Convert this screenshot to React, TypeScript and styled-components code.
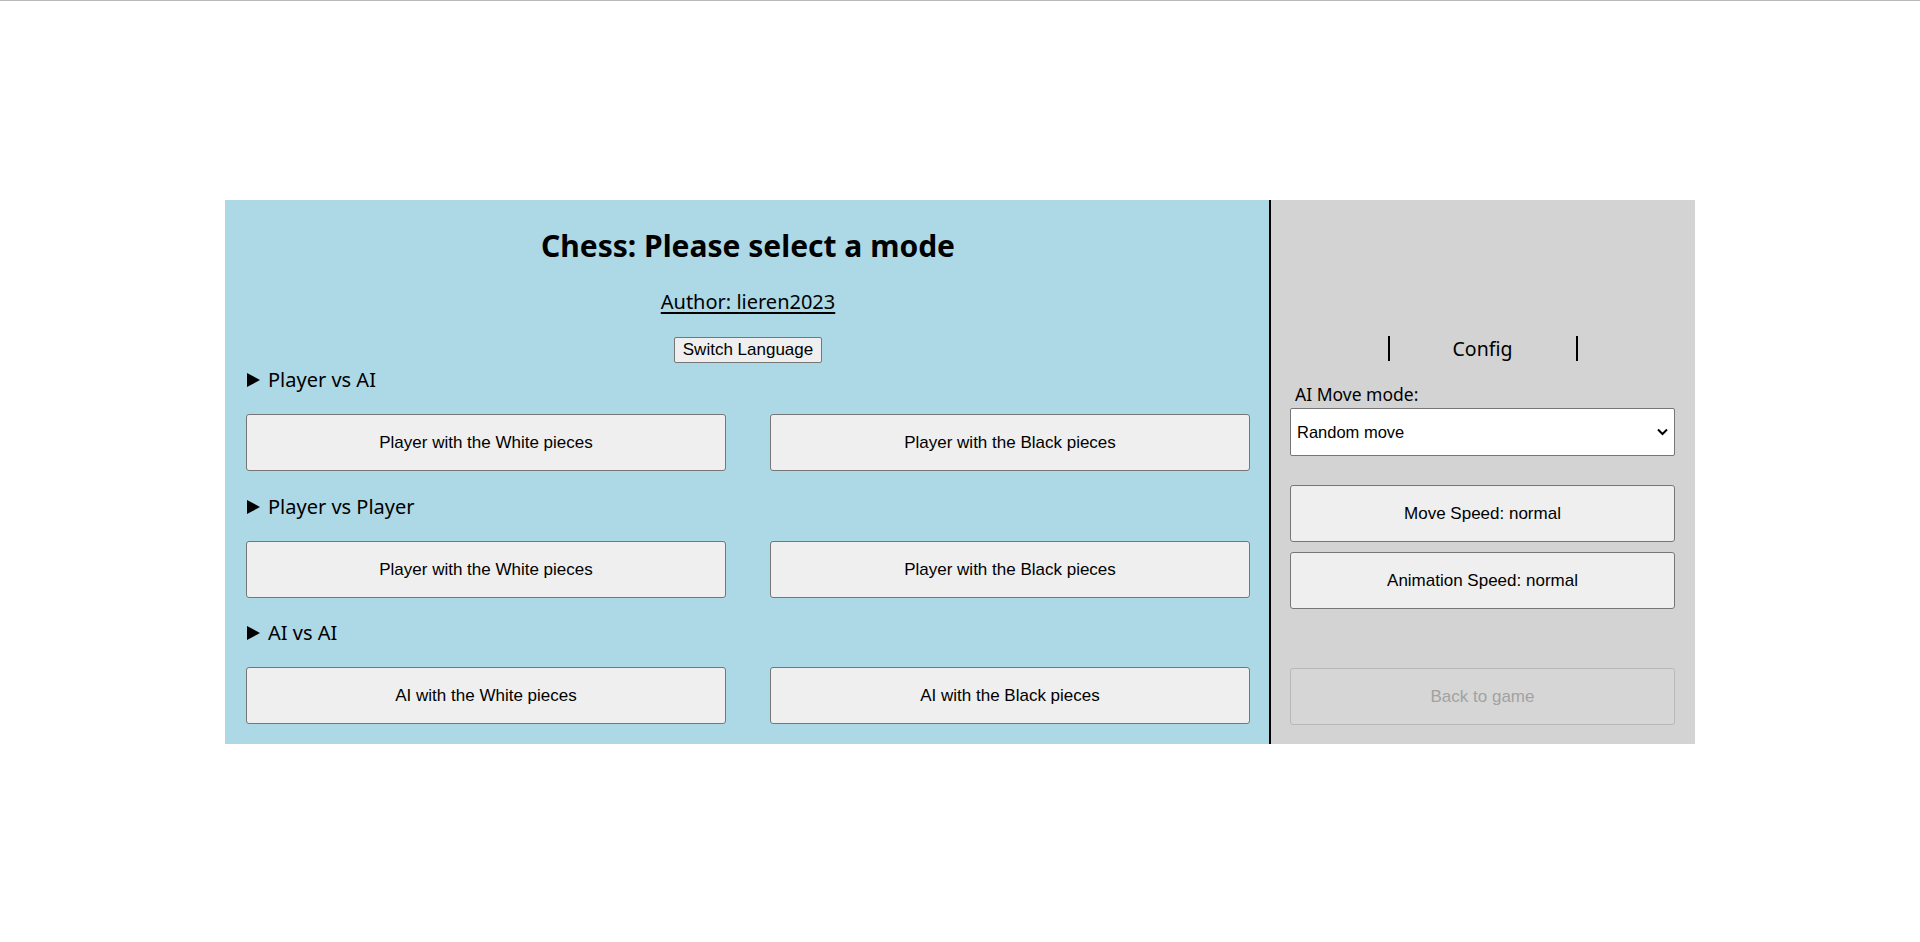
import React from "react";
import styled, { createGlobalStyle } from "styled-components";

const GlobalStyle = createGlobalStyle`
  html, body {
    margin: 0;
    padding: 0;
    background: #ffffff;
  }
  body {
    font-family: "Noto Sans", "Open Sans", sans-serif;
    color: #000;
  }
`;

const Page = styled.div`
  border-top: 1px solid #b9b9b9;
  height: 941px;
  box-sizing: border-box;
  padding-top: 199px;
  display: flex;
  justify-content: center;
  align-items: flex-start;
`;

const Layout = styled.div`
  display: flex;
  height: 544px;
`;

const ModePanel = styled.div`
  width: 1044px;
  box-sizing: border-box;
  background: #add8e6;
  padding: 0 19px 20px 21px;
  display: flex;
  flex-direction: column;
`;

const Title = styled.h1`
  margin: 27px 0 0;
  font-size: 30px;
  line-height: 38px;
  font-weight: 700;
  text-align: center;
`;

const Author = styled.a`
  margin: 25px auto 0;
  font-size: 20px;
  line-height: 24px;
  color: #000;
  text-decoration: underline;
  text-underline-offset: 3px;
`;

const SwitchButton = styled.button`
  margin: 23px auto 0;
  height: 26px;
  padding: 0 8px;
  font-family: "Liberation Sans", Arial, sans-serif;
  font-size: 17px;
  color: #000;
  background: #efefef;
  border: 1px solid #767676;
  border-radius: 2px;
`;

const Summary = styled.div<{ $top: number }>`
  margin-top: ${(p) => p.$top}px;
  display: flex;
  align-items: center;
  gap: 8px;
  font-size: 20px;
  line-height: 28px;
`;

const Triangle = styled.span`
  width: 0;
  height: 0;
  border-top: 7px solid transparent;
  border-bottom: 7px solid transparent;
  border-left: 13px solid #000;
  margin-left: 1px;
`;

const ButtonRow = styled.div`
  margin-top: 20px;
  display: grid;
  grid-template-columns: 480px 480px;
  column-gap: 44px;
`;

const ModeButton = styled.button<{ $height?: number }>`
  height: ${(p) => p.$height ?? 57}px;
  width: 100%;
  font-family: "Liberation Sans", Arial, sans-serif;
  font-size: 17px;
  color: #000;
  background: #efefef;
  border: 1px solid #767676;
  border-radius: 3px;
  padding: 0;

  &:disabled {
    color: #a2a2a2;
    background: #d6d6d6;
    border-color: #b8b8b8;
  }
`;

const ConfigPanel = styled.div`
  width: 426px;
  box-sizing: border-box;
  background: #d3d3d3;
  border-left: 2px solid #000;
  padding: 0 20px 19px 19px;
  display: flex;
  flex-direction: column;
`;

const ConfigTab = styled.div`
  margin: 136px auto 0;
  width: 190px;
  height: 25px;
  box-sizing: border-box;
  border-left: 2px solid #000;
  border-right: 2px solid #000;
  display: flex;
  align-items: center;
  justify-content: center;
  font-size: 19.5px;
`;

const FieldLabel = styled.label`
  margin: 21px 0 0 5px;
  font-size: 17.5px;
  line-height: 24px;
`;

const SelectWrap = styled.div`
  position: relative;
  margin-top: 2px;
`;

const Select = styled.select`
  width: 100%;
  height: 48px;
  appearance: none;
  -webkit-appearance: none;
  background: #fff;
  border: 1px solid #767676;
  border-radius: 2px;
  padding: 0 6px;
  font-family: "Liberation Sans", Arial, sans-serif;
  font-size: 16.5px;
  color: #000;
`;

const Chevron = styled.svg`
  position: absolute;
  right: 7px;
  top: 20px;
  pointer-events: none;
`;

const SettingSlot = styled.div<{ $top: number }>`
  margin-top: ${(p) => p.$top}px;
`;

const sections = [
  { name: "Player vs AI", top: 3, white: "Player with the White pieces", black: "Player with the Black pieces" },
  { name: "Player vs Player", top: 22, white: "Player with the White pieces", black: "Player with the Black pieces" },
  { name: "AI vs AI", top: 21, white: "AI with the White pieces", black: "AI with the Black pieces" },
];

export default function App() {
  return (
    <>
      <GlobalStyle />
      <Page>
        <Layout>
          <ModePanel>
            <Title>Chess: Please select a mode</Title>
            <Author href="#">Author: lieren2023</Author>
            <SwitchButton>Switch Language</SwitchButton>
            {sections.map((s) => (
              <React.Fragment key={s.name}>
                <Summary $top={s.top}>
                  <Triangle />
                  {s.name}
                </Summary>
                <ButtonRow>
                  <ModeButton>{s.white}</ModeButton>
                  <ModeButton>{s.black}</ModeButton>
                </ButtonRow>
              </React.Fragment>
            ))}
          </ModePanel>
          <ConfigPanel>
            <ConfigTab>Config</ConfigTab>
            <FieldLabel htmlFor="ai-mode">AI Move mode:</FieldLabel>
            <SelectWrap>
              <Select id="ai-mode" defaultValue="random">
                <option value="random">Random move</option>
                <option value="minimax">Minimax</option>
              </Select>
              <Chevron width="11" height="8" viewBox="0 0 11 8">
                <path d="M1 1.5 L5.5 6 L10 1.5" fill="none" stroke="#000" strokeWidth="2" />
              </Chevron>
            </SelectWrap>
            <SettingSlot $top={29}>
              <ModeButton>Move Speed: normal</ModeButton>
            </SettingSlot>
            <SettingSlot $top={10}>
              <ModeButton>Animation Speed: normal</ModeButton>
            </SettingSlot>
            <SettingSlot $top={59}>
              <ModeButton disabled>Back to game</ModeButton>
            </SettingSlot>
          </ConfigPanel>
        </Layout>
      </Page>
    </>
  );
}
